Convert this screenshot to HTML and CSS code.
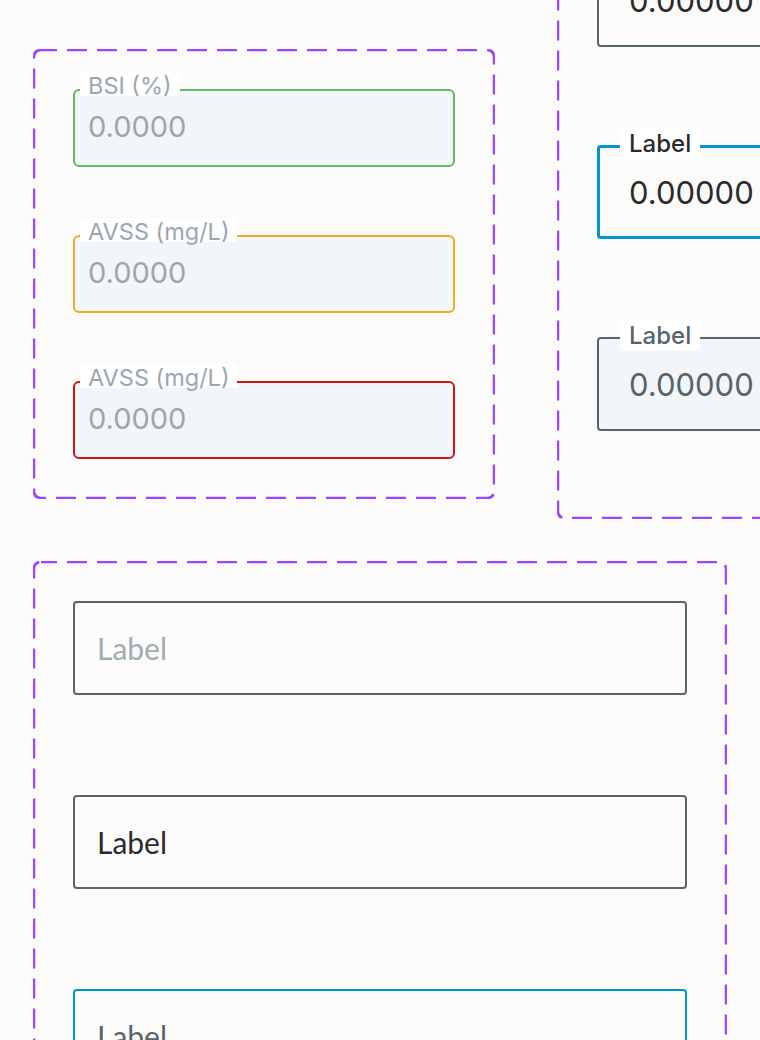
FILE: index.html
```html
<!DOCTYPE html>
<html lang="en">
<head>
    <meta charset="UTF-8">
    <meta name="viewport" content="width=device-width, initial-scale=1.0">
    <title>Input fields</title>
    <link rel="stylesheet" href="styles.css">
</head>
<body>
    <main class="canvas">
        <div class="row">
            <!-- read-only fields with status colours -->
            <section class="set set-status">
                <div class="field field-small ok">
                    <span class="field-label">BSI (%)</span>
                    <div class="field-box">0.0000</div>
                </div>
                <div class="field field-small warn">
                    <span class="field-label">AVSS (mg/L)</span>
                    <div class="field-box">0.0000</div>
                </div>
                <div class="field field-small error">
                    <span class="field-label">AVSS (mg/L)</span>
                    <div class="field-box">0.0000</div>
                </div>
            </section>

            <!-- numeric field states -->
            <section class="set set-number">
                <div class="field field-num">
                    <span class="field-label">Label</span>
                    <div class="field-box">0.00000</div>
                </div>
                <div class="field field-num focus">
                    <span class="field-label">Label</span>
                    <div class="field-box">0.00000</div>
                </div>
                <div class="field field-num disabled">
                    <span class="field-label">Label</span>
                    <div class="field-box">0.00000</div>
                </div>
            </section>
        </div>

        <!-- plain text field states -->
        <section class="set set-text">
            <div class="text-box placeholder">Label</div>
            <div class="text-box">Label</div>
            <div class="text-box focus">Label</div>
        </section>
    </main>
</body>
</html>
```

FILE: styles.css
```css
* {
    margin: 0;
    padding: 0;
    box-sizing: border-box;
}

html, body {
    height: 100%;
    overflow: hidden;
}

body {
    background-color: #fcfbf9;
    font-family: Inter, "Noto Sans", sans-serif;
}

.canvas {
    padding: 0 33px;
    display: flex;
    flex-direction: column;
    gap: 42px;
}

.row {
    display: flex;
    align-items: flex-start;
    gap: 62px;
    margin-top: -87px;
}

/* dashed frame round each component set */
.set {
    flex-shrink: 0;
    display: flex;
    flex-direction: column;
    padding: 40px;
    border-radius: 6px;
    background-image: url("data:image/svg+xml,%3csvg xmlns='http://www.w3.org/2000/svg' width='100%25' height='100%25'%3e%3crect width='100%25' height='100%25' fill='none' rx='8' ry='8' stroke='%239747FF' stroke-width='4.5' stroke-dasharray='20%2c 10' stroke-dashoffset='4' stroke-linecap='butt'/%3e%3c/svg%3e");
}

.set-status {
    width: 462px;
    margin-top: 136px;
    gap: 68px;
}

.set-number {
    width: 440px;
    gap: 98px;
    padding-bottom: 88px;
}

.set-text {
    width: 694px;
    gap: 100px;
    padding-bottom: 120px;
}

.field {
    position: relative;
}

.field-label {
    position: absolute;
    background-color: #fff;
    white-space: nowrap;
}

.field-box {
    display: flex;
    align-items: center;
}

/* small status fields */
.field-small .field-label {
    top: -17px;
    left: 7px;
    height: 24px;
    line-height: 28px;
    padding: 0 8px;
    font-size: 23.5px;
    color: #9ba7af;
}

.field-small .field-box {
    height: 78px;
    padding: 0 0 3px 13px;
    border: 2px solid;
    border-radius: 6px;
    background-color: #f3f6f8;
    font-size: 29px;
    color: #9ba7af;
}

.ok .field-box { border-color: #62bb67; }
.warn .field-box { border-color: #f6a928; }
.error .field-box { border-color: #cc1717; }

/* number fields */
.field-num .field-label {
    top: -17px;
    left: 23px;
    height: 31px;
    line-height: 31px;
    padding: 0 9px;
    border-radius: 4px;
    font-size: 24px;
    font-weight: 500;
    color: #2b2b2b;
}

.field-num .field-box {
    height: 94px;
    padding-left: 30px;
    border: 2px solid #56646e;
    border-radius: 4px;
    font-size: 31px;
    color: #2b2b2b;
}

.field-num.focus .field-box {
    border: 3px solid #0095cf;
    padding-left: 29px;
}

.field-num.disabled .field-label {
    color: #56646e;
}

.field-num.disabled .field-box {
    background-color: #f3f6f8;
    color: #56646e;
}

/* text fields */
.text-box {
    height: 94px;
    display: flex;
    align-items: center;
    padding-left: 22px;
    border: 2px solid #56646e;
    border-radius: 4px;
    font-family: Lato, "Open Sans", sans-serif;
    font-size: 30px;
    color: #2b2b2b;
}

.text-box.placeholder {
    color: #a0acb4;
}

.text-box.focus {
    border-color: #0095cf;
    color: #56646e;
}
```
